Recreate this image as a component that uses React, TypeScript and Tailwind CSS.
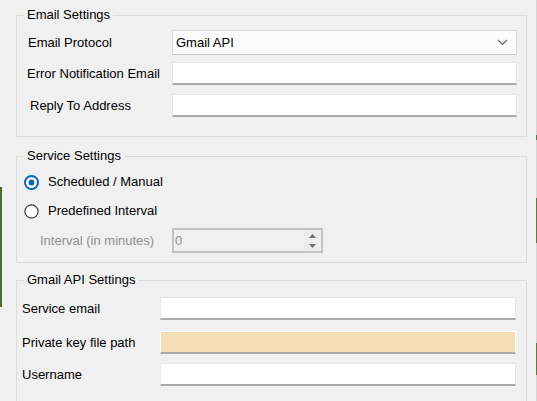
import React, { FC, ReactNode } from "react";

const font = { fontFamily: '"Liberation Sans", Arial, sans-serif' };

interface GroupProps {
    title: string;
    className?: string;
    children: ReactNode;
}

// WinForms-like group box
const Group: FC<GroupProps> = ({ title, className, children }) => (
    <fieldset className={`w-[511px] border border-[#dcdcdc] ${className ?? ""}`}>
        <legend className="ml-[7px] px-[3px] text-[13px] leading-[16px] text-black">{title}</legend>
        {children}
    </fieldset>
);

const TextBox: FC<{ w: string; tinted?: boolean }> = ({ w, tinted }) => (
    <div
        className={`${w} h-[23px] border border-[#e6e6e6] border-b-2 border-b-[#ababab] ${
            tinted ? "bg-[#f5deb3] border-t-white border-x-white" : "bg-white"
        }`}
    />
);

const Radio: FC<{ checked?: boolean }> = ({ checked }) =>
    checked ? (
        <svg width="15" height="15" viewBox="0 0 15 15">
            <circle cx="7.5" cy="7.5" r="6.5" fill="#fff" stroke="#0a64b8" strokeWidth="2" />
            <circle cx="7.5" cy="7.5" r="2.9" fill="#0a64b8" />
        </svg>
    ) : (
        <svg width="15" height="15" viewBox="0 0 15 15">
            <circle cx="7.5" cy="7.5" r="6.6" fill="#fff" stroke="#3c3c3c" strokeWidth="1.2" />
        </svg>
    );

export default function App() {
    return (
        <div className="w-[537px] h-[401px] bg-[#f0f0f0] flex overflow-hidden text-[13px] text-black" style={font}>
            {/* left edge of desktop behind */}
            <div className="w-[2px] flex flex-col">
                <div className="h-[187px]" />
                <div className="h-[120px] bg-[#4d6b31]" />
            </div>

            <div className="flex-1 pl-[14px] pt-[7px]">
                {/* Email Settings */}
                <Group title="Email Settings" className="h-[130px]">
                    <div className="flex items-center mt-[7px]">
                        <span className="w-[155px] pl-[11px]">Email Protocol</span>
                        <div className="w-[345px] h-[25px] bg-[#fbfbfb] border border-[#d9d9d9] border-b-[#c4c4c4] flex items-center justify-between pl-[3px] pr-[8px]">
                            <span>Gmail API</span>
                            <svg width="11" height="7" viewBox="0 0 11 7">
                                <path d="M1 1 L5.5 5.5 L10 1" fill="none" stroke="#6a6a6a" strokeWidth="1.2" />
                            </svg>
                        </div>
                    </div>
                    <div className="flex items-center mt-[7px]">
                        <span className="w-[155px] pl-[10px]">Error Notification Email</span>
                        <TextBox w="w-[345px]" />
                    </div>
                    <div className="flex items-center mt-[9px]">
                        <span className="w-[155px] pl-[13px]">Reply To Address</span>
                        <TextBox w="w-[345px]" />
                    </div>
                </Group>

                {/* Service Settings */}
                <Group title="Service Settings" className="h-[115px] mt-[11px]">
                    <div className="flex items-center gap-[9px] pl-[7px] mt-[10px] h-[16px]">
                        <Radio checked />
                        <span>Scheduled / Manual</span>
                    </div>
                    <div className="flex items-center gap-[9px] pl-[7px] mt-[13px] h-[16px]">
                        <Radio />
                        <span>Predefined Interval</span>
                    </div>
                    <div className="flex items-center mt-[9px]">
                        <span className="w-[155px] pl-[23px] text-[#8f8f8f]">Interval (in minutes)</span>
                        <div className="w-[151px] h-[25px] border-2 border-[#c2c2c2] bg-[#f0f0f0] flex items-center justify-between pl-[1px] pr-[1px]">
                            <span className="text-[#8f8f8f]">0</span>
                            <div className="w-[16px] h-[19px] flex flex-col gap-[1px]">
                                <div className="flex-1 bg-[#ececec] flex items-center justify-center">
                                    <svg width="7" height="4" viewBox="0 0 7 4">
                                        <path d="M0 4 L3.5 0 L7 4 Z" fill="#6d6d6d" />
                                    </svg>
                                </div>
                                <div className="flex-1 bg-[#ececec] flex items-center justify-center">
                                    <svg width="7" height="4" viewBox="0 0 7 4">
                                        <path d="M0 0 L3.5 4 L7 0 Z" fill="#6d6d6d" />
                                    </svg>
                                </div>
                            </div>
                        </div>
                    </div>
                </Group>

                {/* Gmail API Settings */}
                <Group title="Gmail API Settings" className="h-[140px] mt-[9px]">
                    <div className="flex items-center mt-[9px]">
                        <span className="w-[143px] pl-[5px]">Service email</span>
                        <TextBox w="w-[356px]" />
                    </div>
                    <div className="flex items-center mt-[11px]">
                        <span className="w-[143px] pl-[5px]">Private key file path</span>
                        <TextBox w="w-[356px]" tinted />
                    </div>
                    <div className="flex items-center mt-[9px]">
                        <span className="w-[143px] pl-[5px]">Username</span>
                        <TextBox w="w-[356px]" />
                    </div>
                </Group>
            </div>

            {/* right edge of window */}
            <div className="w-[1px] flex flex-col bg-[#d6d6d6]">
                <div className="h-[135px]" />
                <div className="h-[5px] bg-[#5a7a3a]" />
                <div className="h-[58px]" />
                <div className="h-[45px] bg-[#5a7a3a]" />
                <div className="h-[100px]" />
                <div className="h-[32px] bg-[#5a7a3a]" />
            </div>
        </div>
    );
}
